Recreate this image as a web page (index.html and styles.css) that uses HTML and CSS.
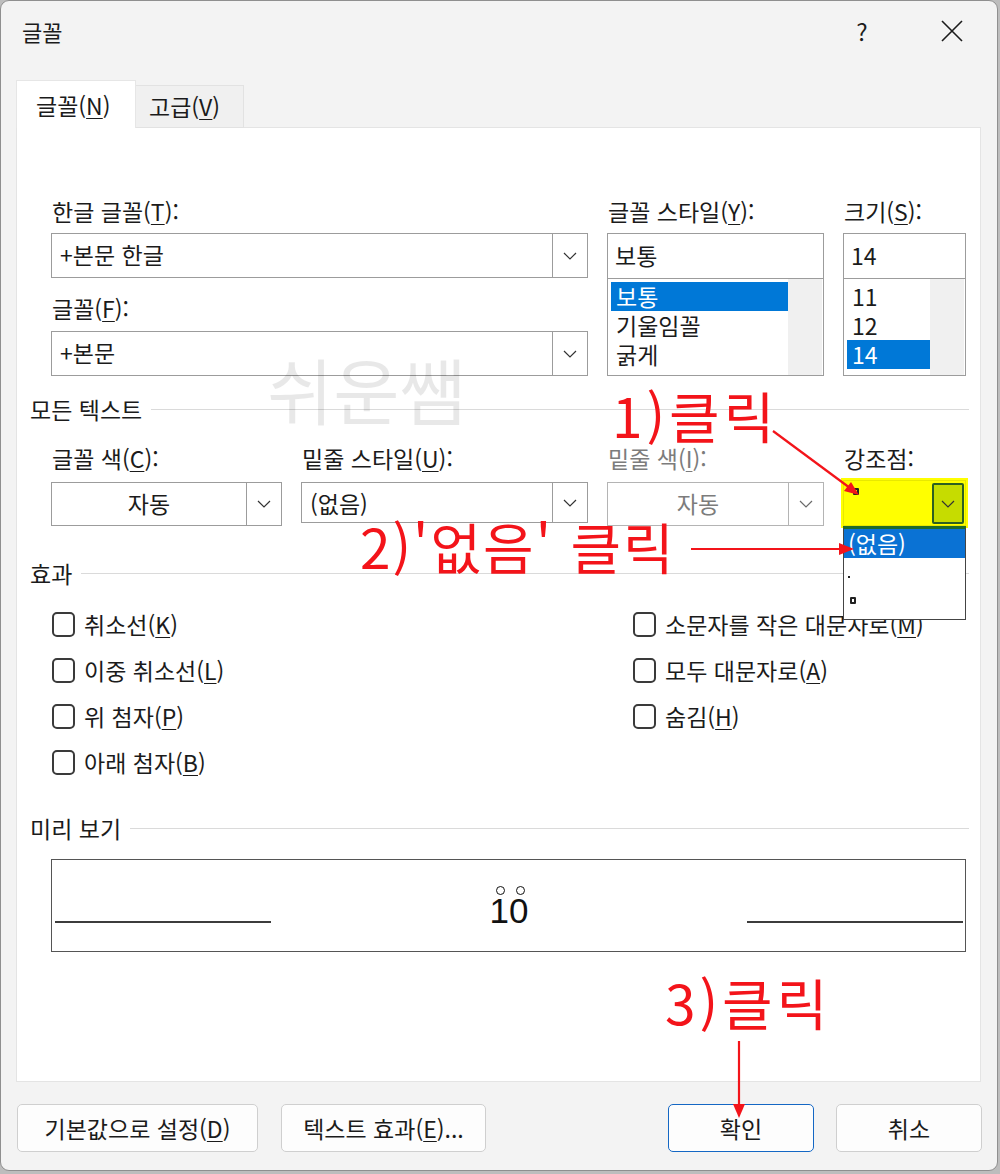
FILE: index.html
```html
<!DOCTYPE html>
<html lang="ko">
<head>
  <meta charset="UTF-8" />
  <title>글꼴</title>
  <link rel="stylesheet" href="styles.css">
</head>
<body>
  <div class="window">
    <div class="titlebar">
      <span class="title">글꼴</span>
      <span class="help">?</span>
      <svg class="close" width="22" height="22" viewBox="0 0 22 22"><path d="M1 1L21 21M21 1L1 21" /></svg>
    </div>

    <div class="tabs">
      <div class="tab active">글꼴(<u>N</u>)</div>
      <div class="tab">고급(<u>V</u>)</div>
    </div>

    <div class="panel">
      <div class="font-grid">
        <div class="col">
          <label>한글 글꼴(<u>T</u>):</label>
          <div class="combo">
            <span class="value">+본문 한글</span>
            <span class="drop"><svg width="14" height="8" viewBox="0 0 14 8"><path d="M1 1L7 7L13 1" /></svg></span>
          </div>
          <label class="next">글꼴(<u>F</u>):</label>
          <div class="combo">
            <span class="value">+본문</span>
            <span class="drop"><svg width="14" height="8" viewBox="0 0 14 8"><path d="M1 1L7 7L13 1" /></svg></span>
          </div>
        </div>
        <div class="col">
          <label>글꼴 스타일(<u>Y</u>):</label>
          <div class="textbox">보통</div>
          <div class="listbox">
            <ul>
              <li class="sel">보통</li>
              <li>기울임꼴</li>
              <li>굵게</li>
            </ul>
            <div class="track"></div>
          </div>
        </div>
        <div class="col">
          <label>크기(<u>S</u>):</label>
          <div class="textbox">14</div>
          <div class="listbox">
            <ul>
              <li>11</li>
              <li>12</li>
              <li class="sel">14</li>
            </ul>
            <div class="track"></div>
          </div>
        </div>
      </div>

      <div class="group-head">모든 텍스트</div>

      <div class="text-grid">
        <div class="col">
          <label>글꼴 색(<u>C</u>):</label>
          <div class="combo short">
            <span class="value center">자동</span>
            <span class="drop"><svg width="14" height="8" viewBox="0 0 14 8"><path d="M1 1L7 7L13 1" /></svg></span>
          </div>
        </div>
        <div class="col">
          <label>밑줄 스타일(<u>U</u>):</label>
          <div class="combo thin">
            <span class="value">(없음)</span>
            <span class="drop"><svg width="14" height="8" viewBox="0 0 14 8"><path d="M1 1L7 7L13 1" /></svg></span>
          </div>
        </div>
        <div class="col disabled">
          <label>밑줄 색(<u>I</u>):</label>
          <div class="combo short">
            <span class="value center">자동</span>
            <span class="drop"><svg width="14" height="8" viewBox="0 0 14 8"><path d="M1 1L7 7L13 1" /></svg></span>
          </div>
        </div>
        <div class="col">
          <label>강조점:</label>
          <div class="emph-wrap">
            <div class="combo short emph">
              <span class="value"><span class="mark"></span></span>
              <span class="drop"><svg width="14" height="8" viewBox="0 0 14 8"><path d="M1 1L7 7L13 1" /></svg></span>
            </div>
            <ul class="popup">
              <li class="sel">(없음)</li>
              <li><span class="dot"></span></li>
              <li><span class="mark"></span></li>
            </ul>
          </div>
        </div>
      </div>

      <div class="group-head">효과</div>

      <div class="effects">
        <div class="check"><span class="box"></span>취소선(<u>K</u>)</div>
        <div class="check"><span class="box"></span>이중 취소선(<u>L</u>)</div>
        <div class="check"><span class="box"></span>위 첨자(<u>P</u>)</div>
        <div class="check"><span class="box"></span>아래 첨자(<u>B</u>)</div>
        <div class="check"><span class="box"></span>소문자를 작은 대문자로(<u>M</u>)</div>
        <div class="check"><span class="box"></span>모두 대문자로(<u>A</u>)</div>
        <div class="check"><span class="box"></span>숨김(<u>H</u>)</div>
      </div>

      <div class="group-head">미리 보기</div>

      <div class="preview">
        <span class="rule"></span>
        <span class="sample"><span class="ring">1</span><span class="ring">0</span></span>
        <span class="rule"></span>
      </div>

      <div class="watermark">쉬운쌤</div>
    </div>

    <div class="buttons">
      <button class="btn wide">기본값으로 설정(<u>D</u>)</button>
      <button class="btn mid">텍스트 효과(<u>E</u>)...</button>
      <button class="btn ok">확인</button>
      <button class="btn">취소</button>
    </div>

    <div class="note note-1">1)클릭</div>
    <div class="note note-2">2)'없음' 클릭</div>
    <div class="note note-3">3)클릭</div>

    <svg class="arrows" width="998" height="1171" viewBox="0 0 998 1171">
      <line x1="772" y1="430" x2="849" y2="487" />
      <polygon points="858,494 843,490 850,481" />
      <line x1="690" y1="548" x2="842" y2="548" />
      <polygon points="853,548 838,542 838,554" />
      <line x1="738" y1="1040" x2="738" y2="1106" />
      <polygon points="738,1117 732,1103 744,1103" />
    </svg>
  </div>
</body>
</html>
```

FILE: styles.css
```css
* {
  margin: 0;
  padding: 0;
  box-sizing: border-box;
}

body {
  width: 1000px;
  height: 1174px;
  overflow: hidden;
  background: #bdbdbd;
  font-family: "Noto Sans CJK KR", sans-serif;
  color: #1b1b1b;
}

u {
  text-underline-offset: 3px;
  text-decoration-thickness: 1px;
}

.window {
  position: relative;
  width: 998px;
  height: 1171px;
  background: #f3f3f3;
  border: 1px solid #8f8f8f;
  border-radius: 9px;
  overflow: hidden;
}

/* title bar */
.titlebar {
  height: 66px;
  display: flex;
  align-items: center;
  padding: 0 0 7px 21px;
}

.title {
  flex: 1;
  font-size: 22px;
}

.help {
  width: 24px;
  text-align: center;
  font-size: 24px;
  margin-right: 67px;
}

.close {
  margin-right: 34px;
  fill: none;
  stroke: #1b1b1b;
  stroke-width: 1.6;
}

/* tabs */
.tabs {
  position: relative;
  z-index: 1;
  display: flex;
  align-items: flex-end;
  height: 48px;
  margin: 13px 0 0 15px;
}

.tab {
  font-size: 23px;
  line-height: 30px;
}

.tab.active {
  width: 120px;
  height: 48px;
  padding: 9px 0 0 19px;
  background: #fff;
  border: 1px solid #e6e6e6;
  border-bottom: none;
}

.tab:not(.active) {
  width: 108px;
  height: 43px;
  padding: 5px 0 0 13px;
  background: #f0f0f0;
  border: 1px solid #e2e2e2;
  border-left: none;
}

/* main panel */
.panel {
  position: relative;
  z-index: 0;
  width: 965px;
  height: 955px;
  margin: -1px 0 0 15px;
  background: #fff;
  border: 1px solid #e4e4e4;
}

label {
  display: block;
  height: 30px;
  margin-bottom: 7px;
  padding-left: 1px;
  font-size: 23px;
  line-height: 30px;
  white-space: nowrap;
}

.font-grid {
  display: grid;
  grid-template-columns: 537px 217px 123px;
  column-gap: 19px;
  margin: 68px 0 0 34px;
}

.font-grid label.next {
  margin-top: 15px;
  margin-bottom: 8px;
}

.combo {
  display: flex;
  height: 45px;
  background: #fff;
  border: 1px solid #9c9c9c;
}

.combo.short {
  height: 44px;
}

.combo.thin {
  height: 41px;
}

.combo .value {
  flex: 1;
  padding-left: 8px;
  font-size: 23px;
  line-height: 40px;
}

.combo .value.center {
  text-align: center;
  padding-left: 0;
}

.drop {
  width: 35px;
  display: flex;
  align-items: center;
  justify-content: center;
  border-left: 1px solid #9c9c9c;
}

.drop svg {
  fill: none;
  stroke: #333;
  stroke-width: 1.2;
}

.textbox {
  height: 46px;
  padding-left: 7px;
  border: 1px solid #9c9c9c;
  font-size: 23px;
  line-height: 42px;
}

.listbox {
  display: flex;
  height: 97px;
  padding: 3px 1px 3px 3px;
  border: 1px solid #9c9c9c;
  border-top: none;
}

.listbox ul {
  flex: 1;
  list-style: none;
}

.listbox li {
  height: 29px;
  padding-left: 5px;
  font-size: 23px;
  line-height: 29px;
}

.listbox li.sel {
  background: #0078d7;
  color: #fff;
}

.track {
  width: 34px;
  margin: -3px 0;
  background: #f0f0f0;
}

/* section headings */
.group-head {
  display: flex;
  align-items: center;
  height: 30px;
  margin-top: 18px;
  padding: 0 11px 0 13px;
  font-size: 23px;
  line-height: 30px;
}

.group-head::after {
  content: "";
  flex: 1;
  height: 1px;
  margin-left: 9px;
  background: #dadada;
}

.text-grid {
  display: grid;
  grid-template-columns: 231px 287px 217px 123px;
  column-gap: 19px;
  margin: 19px 0 0 34px;
}

.text-grid label {
  margin-bottom: 9px;
}

.disabled label,
.disabled .value {
  color: #7c7c7c;
}

.disabled .combo,
.disabled .drop {
  border-color: #b4b4b4;
}

.disabled .drop svg {
  stroke: #6a6a6a;
}

/* emphasis mark combo, highlighted */
.emph-wrap {
  position: relative;
}

.combo.emph {
  height: 46px;
  margin-top: -2px;
  background: #ffff00;
  border-color: #e8e800;
  box-shadow: 0 0 0 2px #ffff00;
}

.emph .value {
  display: flex;
  align-items: flex-start;
  padding: 7px 0 0 9px;
}

.mark {
  display: block;
  width: 6px;
  height: 7px;
  border: 2px solid #222;
  border-radius: 1px;
}

.emph .drop {
  width: 32px;
  margin: 2px 1px 1px 0;
  background: #c6dc00;
  border: 2px solid #2d5f22;
  border-radius: 2px;
}

.popup {
  position: absolute;
  z-index: 2;
  left: 0;
  top: 46px;
  width: 123px;
  height: 94px;
  list-style: none;
  background: #fff;
  border: 1px solid #444;
  border-top: 3px solid #1f6b2a;
}

.popup li {
  height: 24px;
  padding-left: 4px;
  font-size: 23px;
  line-height: 27px;
}

.popup li.sel {
  height: 29px;
  background: #0a72d4;
  color: #fff;
  line-height: 28px;
}

.popup li:nth-child(2) {
  height: 26px;
  padding-top: 18px;
}

.popup li:nth-child(3) {
  padding: 13px 0 0 6px;
}

.dot {
  display: block;
  width: 2px;
  height: 2px;
  background: #222;
}

/* effects */
.text-grid + .group-head {
  margin-top: 32px;
}

.effects {
  display: grid;
  grid-template-columns: 581px 1fr;
  grid-template-rows: repeat(4, 46px);
  grid-auto-flow: column;
  margin: 13px 0 0 35px;
}

.check {
  display: flex;
  align-items: center;
  font-size: 23px;
  white-space: nowrap;
}

.box {
  width: 23px;
  height: 25px;
  margin-right: 9px;
  border: 2px solid #3a3a3a;
  border-radius: 5px;
  background: #fff;
}

.effects + .group-head {
  margin-top: 28px;
}

/* preview */
.preview {
  display: flex;
  align-items: baseline;
  justify-content: space-between;
  width: 915px;
  height: 93px;
  margin: 16px 0 0 34px;
  padding: 0 2px 0 3px;
  border: 1px solid #555;
}

.rule {
  display: inline-block;
  width: 216px;
  height: 2px;
  background: #3c3c3c;
}

.sample {
  margin-top: 31px;
  font-family: "Liberation Sans", sans-serif;
  font-size: 35px;
  line-height: 40px;
  color: #111;
}

.ring {
  position: relative;
}

.ring::before {
  content: "";
  position: absolute;
  left: 50%;
  top: -5px;
  width: 7px;
  height: 7px;
  margin-left: -3px;
  border: 1.5px solid #111;
  border-radius: 50%;
}

.watermark {
  position: absolute;
  left: 250px;
  top: 224px;
  font-size: 72px;
  line-height: 1;
  color: rgba(0, 0, 0, 0.09);
  pointer-events: none;
}

/* bottom buttons */
.buttons {
  display: flex;
  margin: 22px 0 0 16px;
}

.btn {
  height: 48px;
  width: 146px;
  font-family: "Noto Sans CJK KR", sans-serif;
  font-size: 23px;
  color: #1b1b1b;
  background: #fdfdfd;
  border: 1px solid #cfcfcf;
  border-radius: 5px;
}

.btn.wide {
  width: 241px;
}

.btn.mid {
  width: 205px;
  margin-left: 23px;
}

.btn.ok {
  margin-left: 182px;
  border-color: #1467c4;
}

.btn.ok + .btn {
  margin-left: 22px;
}

/* red annotations */
.note {
  position: absolute;
  font-size: 55px;
  line-height: 1;
  letter-spacing: 4px;
  color: #f3141a;
  white-space: nowrap;
  pointer-events: none;
}

.note-1 {
  left: 611px;
  top: 386px;
}

.note-2 {
  left: 359px;
  top: 517px;
  letter-spacing: 2px;
}

.note-3 {
  left: 664px;
  top: 973px;
}

.arrows {
  position: absolute;
  left: 0;
  top: 0;
  pointer-events: none;
}

.arrows line {
  stroke: #f3141a;
  stroke-width: 2.2;
}

.arrows polygon {
  fill: #f3141a;
}
```
